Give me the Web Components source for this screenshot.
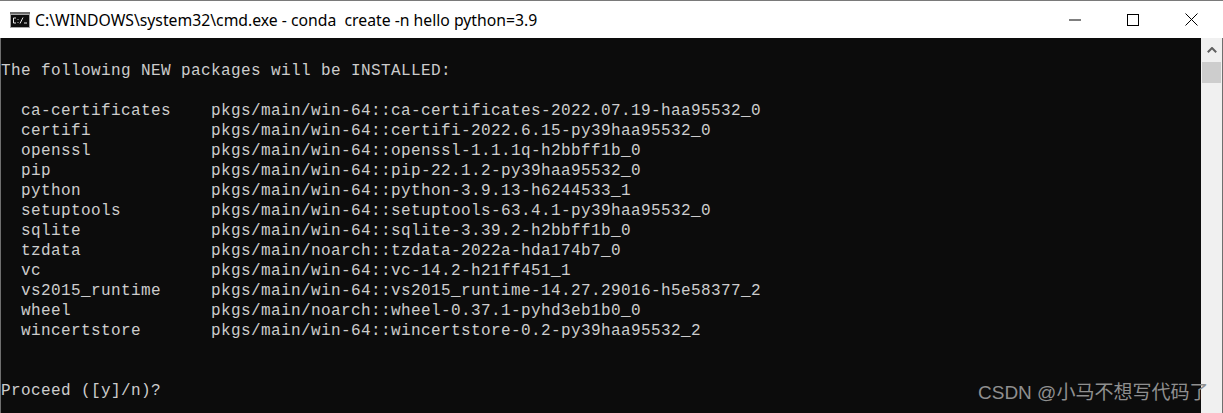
<!doctype html>
<html>
<head>
<meta charset="utf-8">
<title>cmd</title>
<style>
  html, body { margin: 0; padding: 0; background: #fff; }
  body { width: 1223px; height: 413px; overflow: hidden; }
</style>
<script>
class CmdWindow extends HTMLElement {
  constructor() {
    super();
    this.attachShadow({ mode: "open" });
    this.shadowRoot.innerHTML = `
      <style>
        :host {
          position: relative;
          display: grid;
          grid-template-rows: 37px 1fr;
          grid-template-columns: 1px 1fr 21px 1px;
          width: 1223px;
          height: 413px;
          box-sizing: border-box;
          border-top: 1px solid #7a7a7a;
          background: #fff;
          overflow: hidden;
        }
        .title { grid-column: 1 / -1; min-width: 0; }
        .edge { background: #6f6f6f; }
        .body { min-width: 0; background: #0c0c0c; overflow: hidden; }
        .bar { min-width: 0; }
      </style>
      <div class="title"><slot name="title"></slot></div>
      <div class="edge"></div>
      <div class="body"><slot></slot></div>
      <div class="bar"><slot name="scrollbar"></slot></div>
      <div class="edge"></div>
      <slot name="overlay"></slot>
    `;
  }
}

class CmdTitlebar extends HTMLElement {
  constructor() {
    super();
    this.attachShadow({ mode: "open" });
    this.shadowRoot.innerHTML = `
      <style>
        :host {
          display: flex;
          align-items: center;
          height: 37px;
          background: #fff;
          color: #000;
          font: 15.75px/20px "Noto Sans", "Liberation Sans", sans-serif;
        }
        .icon { flex: 0 0 20px; margin-left: 10px; margin-right: 5px; display: block; }
        .text { flex: 1 1 auto; white-space: pre; min-width: 0; }
        .btn {
          flex: 0 0 auto;
          width: 58px;
          height: 37px;
          display: grid;
          place-items: center;
        }
        .btn svg { display: block; }
        .btns { display: flex; margin-right: 3px; }
      </style>
      <svg class="icon" width="20" height="16" viewBox="0 0 20 16">
        <rect x="0" y="0" width="20" height="16" fill="#a8a8a8"/>
        <rect x="0" y="0" width="20" height="2" fill="#6c6c6c"/>
        <rect x="1" y="3" width="18" height="12" fill="#0c0c0c"/>
        <path d="M6 6H3.5v5H6M8 7v.8M8 10v.8M13 5.5l-3 6M14 11h3" fill="none" stroke="#e8e8e8" stroke-width="1"/>
      </svg>
      <span class="text"><slot></slot></span>
      <div class="btns">
        <div class="btn"><svg width="12" height="2" viewBox="0 0 12 2"><path d="M0 1h12" stroke="#000" stroke-width="1"/></svg></div>
        <div class="btn"><svg width="12" height="12" viewBox="0 0 12 12"><rect x=".5" y=".5" width="11" height="11" fill="none" stroke="#000"/></svg></div>
        <div class="btn"><svg width="13" height="13" viewBox="0 0 13 13"><path d="M.5 .5l12 12M12.5 .5l-12 12" fill="none" stroke="#000"/></svg></div>
      </div>
    `;
  }
}

class CmdConsole extends HTMLElement {
  constructor() {
    super();
    this.attachShadow({ mode: "open" });
    this.shadowRoot.innerHTML = `
      <style>
        :host {
          display: flex;
          flex-direction: column;
          padding-top: 3px;
          color: #cccccc;
          font: 16px/20px "Liberation Mono", "Noto Sans CJK SC", monospace;
          letter-spacing: 0.4px;
        }
      </style>
      <slot></slot>
    `;
  }
}

class CmdLine extends HTMLElement {
  constructor() {
    super();
    this.attachShadow({ mode: "open" });
    // no whitespace in this template: the host is white-space: pre and would render it
    this.shadowRoot.innerHTML = `<style>:host { display: block; height: 20px; white-space: pre; }</style><slot></slot>`;
  }
}

class CmdScrollbar extends HTMLElement {
  constructor() {
    super();
    this.attachShadow({ mode: "open" });
    this.shadowRoot.innerHTML = `
      <style>
        :host {
          display: flex;
          flex-direction: column;
          height: 100%;
          background: #f0f0f0;
        }
        .arrow { height: 24px; display: grid; place-items: center; }
        .arrow svg { display: block; }
        .thumb { height: 21px; margin: 0 1px; background: #cdcdcd; }
      </style>
      <div class="arrow"><svg width="10" height="6" viewBox="0 0 10 6"><path d="M.8 5.2L5 1l4.2 4.2" fill="none" stroke="#606060" stroke-width="2"/></svg></div>
      <div class="thumb"></div>
    `;
  }
}

class CsdnMark extends HTMLElement {
  constructor() {
    super();
    this.attachShadow({ mode: "open" });
    this.shadowRoot.innerHTML = `
      <style>
        :host {
          position: absolute;
          left: 978px;
          top: 382px;
          color: #8f8f8f;
          font: 19px/20px "Liberation Sans", "Noto Sans CJK SC", sans-serif;
          white-space: nowrap;
        }
      </style>
      <slot></slot>
    `;
  }
}

customElements.define("cmd-window", CmdWindow);
customElements.define("cmd-titlebar", CmdTitlebar);
customElements.define("cmd-console", CmdConsole);
customElements.define("cmd-line", CmdLine);
customElements.define("cmd-scrollbar", CmdScrollbar);
customElements.define("csdn-mark", CsdnMark);
</script>
</head>
<body>
<cmd-window>
  <cmd-titlebar slot="title">C:\WINDOWS\system32\cmd.exe - conda  create -n hello python=3.9</cmd-titlebar>
  <cmd-console>
    <cmd-line></cmd-line>
    <cmd-line>The following NEW packages will be INSTALLED:</cmd-line>
    <cmd-line></cmd-line>
    <cmd-line>  ca-certificates    pkgs/main/win-64::ca-certificates-2022.07.19-haa95532_0</cmd-line>
    <cmd-line>  certifi            pkgs/main/win-64::certifi-2022.6.15-py39haa95532_0</cmd-line>
    <cmd-line>  openssl            pkgs/main/win-64::openssl-1.1.1q-h2bbff1b_0</cmd-line>
    <cmd-line>  pip                pkgs/main/win-64::pip-22.1.2-py39haa95532_0</cmd-line>
    <cmd-line>  python             pkgs/main/win-64::python-3.9.13-h6244533_1</cmd-line>
    <cmd-line>  setuptools         pkgs/main/win-64::setuptools-63.4.1-py39haa95532_0</cmd-line>
    <cmd-line>  sqlite             pkgs/main/win-64::sqlite-3.39.2-h2bbff1b_0</cmd-line>
    <cmd-line>  tzdata             pkgs/main/noarch::tzdata-2022a-hda174b7_0</cmd-line>
    <cmd-line>  vc                 pkgs/main/win-64::vc-14.2-h21ff451_1</cmd-line>
    <cmd-line>  vs2015_runtime     pkgs/main/win-64::vs2015_runtime-14.27.29016-h5e58377_2</cmd-line>
    <cmd-line>  wheel              pkgs/main/noarch::wheel-0.37.1-pyhd3eb1b0_0</cmd-line>
    <cmd-line>  wincertstore       pkgs/main/win-64::wincertstore-0.2-py39haa95532_2</cmd-line>
    <cmd-line></cmd-line>
    <cmd-line></cmd-line>
    <cmd-line>Proceed ([y]/n)?</cmd-line>
  </cmd-console>
  <cmd-scrollbar slot="scrollbar"></cmd-scrollbar>
  <csdn-mark slot="overlay">CSDN @小马不想写代码了</csdn-mark>
</cmd-window>
</body>
</html>
